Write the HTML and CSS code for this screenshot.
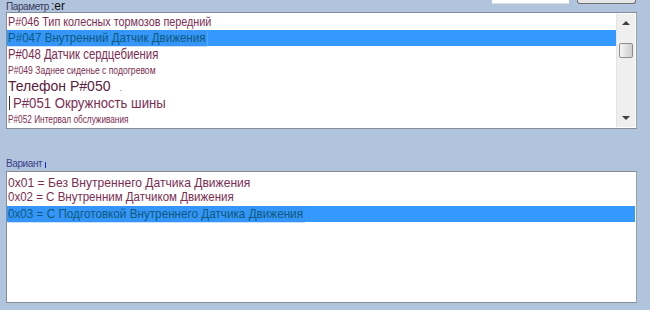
FILE: index.html
```html
<!DOCTYPE html>
<html lang="ru">
<head>
    <meta charset="UTF-8">
    <title>Параметр</title>
    <link rel="stylesheet" href="styles.css">
</head>
<body>
    <div class="panel">
        <div class="top-row">
            <span class="label">Параметр</span><span class="label-extra">:er</span>
            <div class="top-controls">
                <div class="top-input"></div>
                <div class="top-button"></div>
            </div>
        </div>

        <div class="listbox params">
            <div class="items">
                <div class="item s12"><span class="t c90">P#046 Тип колесных тормозов передний</span></div>
                <div class="item selected s13"><span class="t hl c89">P#047 Внутренний Датчик Движения</span></div>
                <div class="item s14"><span class="t c81">P#048 Датчик сердцебиения</span></div>
                <div class="item s11"><span class="t c78">P#049 Заднее сиденье с подогревом</span></div>
                <div class="item wide s14"><span class="t">Телефон P#050</span><span class="dot">.</span></div>
                <div class="item s14 barred"><span class="bar"></span><span class="t c94">P#051 Окружность шины</span></div>
                <div class="item s11"><span class="t c75">P#052 Интервал обслуживания</span></div>
            </div>
            <div class="scrollbar">
                <div class="arrow up"></div>
                <div class="thumb"></div>
                <div class="track"></div>
                <div class="arrow down"></div>
            </div>
        </div>

        <div class="label variant">Вариант <span class="tick"></span></div>

        <div class="listbox variants">
            <div class="items">
                <div class="item s13"><span class="t c93">0x01 = Без Внутреннего Датчика Движения</span></div>
                <div class="item s12"><span class="t c96">0x02 = С Внутренним Датчиком Движения</span></div>
                <div class="item selected s13"><span class="t hl c90">0x03 = С Подготовкой Внутреннего Датчика Движения</span></div>
            </div>
        </div>
    </div>
</body>
</html>
```

FILE: styles.css
```css
* {
    margin: 0;
    padding: 0;
    box-sizing: border-box;
}

body {
    background: #b0c4de;
    font-family: 'Liberation Sans', Arial, sans-serif;
    width: 650px;
    height: 310px;
    overflow: hidden;
}

.panel {
    padding: 0 13px 0 6px;
}

/* header row */
.top-row {
    display: flex;
    align-items: flex-start;
    height: 12px;
}

.label {
    font-size: 10px;
    color: #3a3a5a;
    letter-spacing: -0.4px;
    line-height: 12px;
    padding-top: 1px;
}

.label-extra {
    font-size: 12px;
    color: #111;
    line-height: 12px;
    margin-left: 2px;
}

.top-controls {
    display: flex;
    margin-left: auto;
    gap: 8px;
    margin-right: 1px;
}

.top-input {
    width: 77px;
    height: 4px;
    background: #fff;
    border-bottom: 1px solid #d8dde6;
}

.top-button {
    width: 59px;
    height: 4px;
    background: #e6e6e6;
    border: 1px solid #707070;
    border-top: none;
    border-radius: 0 0 3px 3px;
}

/* list boxes */
.listbox {
    display: flex;
    background: #fff;
    border: 1px solid #858b96;
    border-right-color: #9aa0a8;
}

.params {
    height: 117px;
}

.variants {
    height: 132px;
}

.items {
    flex: 1;
}

.item {
    height: 16px;
    line-height: 16px;
    color: #7a2d52;
    white-space: nowrap;
    padding-left: 1px;
}

.params .item:first-child {
    height: 17px;
    line-height: 19px;
}

.s11 { font-size: 11px; }
.s12 { font-size: 12px; }
.s13 { font-size: 13px; }
.s14 { font-size: 14px; }

/* horizontally squeezed text, as in the original capture */
.t {
    display: inline-block;
    transform-origin: left center;
}

.c75 { transform: scaleX(0.75); }
.c78 { transform: scaleX(0.78); }
.c81 { transform: scaleX(0.81); }
.c89 { transform: scaleX(0.89); }
.c90 { transform: scaleX(0.9); }
.c93 { transform: scaleX(0.93); }
.c94 { transform: scaleX(0.94); }
.c96 { transform: scaleX(0.96); }

.wide {
    color: #5a2040;
}

.barred {
    display: flex;
    align-items: center;
    height: 17px;
    padding-left: 2px;
}

.bar {
    width: 1px;
    height: 14px;
    background: #333;
    margin-right: 3px;
}

.dot {
    color: #3a6fd0;
    font-size: 9px;
    margin-left: 9px;
}

.selected {
    background: #3399ff;
    color: #0c5a80;
}

.selected .hl {
    background: #3596f8;
    box-shadow: 0 1px 0 #c8e0fb;
    padding-right: 2px;
}

.variant {
    display: flex;
    align-items: center;
    margin-top: 27px;
    height: 15px;
    color: #3d3d8a;
}

.tick {
    width: 1px;
    height: 6px;
    background: #2020c0;
    margin-left: 3px;
    margin-top: 2px;
}

.variants .items {
    padding-top: 1px;
}

.variants .item:first-child {
    height: 17px;
    line-height: 20px;
}

.variants .item.s12 {
    height: 15px;
    line-height: 14px;
}

.variants .selected {
    margin-top: 1px;
    margin-right: 1px;
}

/* scrollbar */
.scrollbar {
    width: 19px;
    display: flex;
    flex-direction: column;
    background: #efefef;
    border-left: 1px solid #e4e4e4;
    margin: 1px 1px 1px 0;
}

.arrow {
    height: 18px;
    display: flex;
    align-items: center;
    justify-content: center;
}

.arrow::before {
    content: "";
    border-left: 4px solid transparent;
    border-right: 4px solid transparent;
}

.arrow.up::before {
    border-bottom: 4px solid #404040;
}

.arrow.down::before {
    border-top: 4px solid #404040;
}

.thumb {
    height: 15px;
    margin: 11px 2px 0 2px;
    border: 1px solid #8c8c8c;
    border-radius: 2px;
    background: linear-gradient(to right, #f6f6f6, #dcdcdc 60%, #cfcfcf);
}

.track {
    flex: 1;
}
```
